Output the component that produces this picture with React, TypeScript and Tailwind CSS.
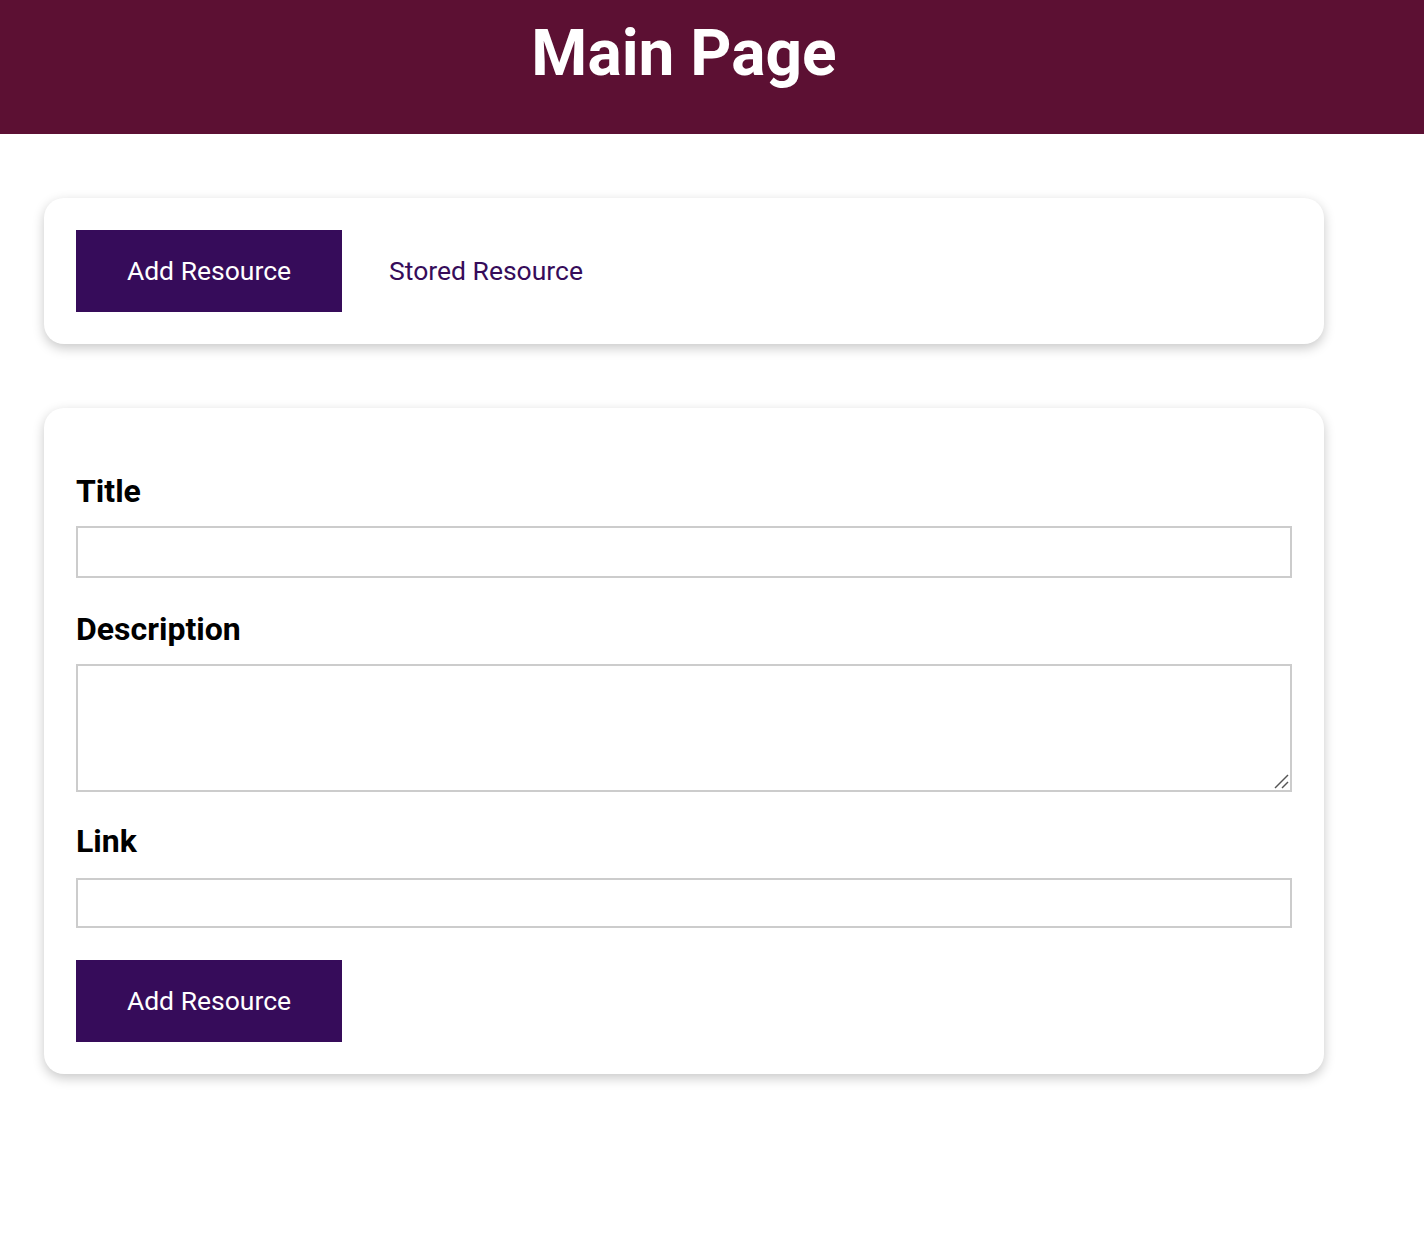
import React from "react";

const App = () => {
  return (
    <div className="min-h-[1258px] bg-white font-['Roboto',sans-serif]">
      <header className="w-full h-[134px] bg-[#5c1033] flex justify-center pt-[16px] pr-[56px]">
        <h1 className="text-[64px] leading-[75px] font-bold text-white">Main Page</h1>
      </header>

      <main className="pl-[44px] pt-[64px] flex flex-col gap-[64px]">
        <div className="w-[1280px] bg-white rounded-[20px] shadow-[0_4px_12px_rgba(0,0,0,0.22)] p-[32px] flex items-center">
          <button className="w-[266px] h-[82px] bg-[#360c5a] text-white text-[26.5px] cursor-pointer">
            Add Resource
          </button>
          <button className="h-[82px] pl-[47px] pr-[48px] text-[#360c5a] text-[26.5px] cursor-pointer">
            Stored Resource
          </button>
        </div>

        <form className="w-[1280px] bg-white rounded-[20px] shadow-[0_4px_12px_rgba(0,0,0,0.22)] p-[32px] flex flex-col">
          <label className="block mt-[32px] mb-[16px] text-[32px] leading-[38px] font-bold text-black">Title</label>
          <input type="text" className="h-[52px] w-full border-2 border-[#cccccc] outline-none" />

          <label className="block mt-[32px] mb-[16px] text-[32px] leading-[38px] font-bold text-black">Description</label>
          <div className="relative">
            <textarea className="h-[128px] w-full border-2 border-[#cccccc] outline-none block resize-none" />
            <svg className="absolute right-[2px] bottom-[2px] pointer-events-none" width="18" height="18" viewBox="0 0 18 18">
              <line x1="3" y1="16" x2="16" y2="3" stroke="#555" strokeWidth="1.5" />
              <line x1="10" y1="16" x2="16" y2="10" stroke="#555" strokeWidth="1.5" />
            </svg>
          </div>

          <label className="block mt-[30px] mb-[18px] text-[32px] leading-[38px] font-bold text-black">Link</label>
          <input type="text" className="h-[50px] w-full border-2 border-[#cccccc] outline-none" />

          <div className="mt-[32px]">
            <button type="button" className="w-[266px] h-[82px] bg-[#360c5a] text-white text-[26.5px] cursor-pointer">
              Add Resource
            </button>
          </div>
        </form>
      </main>
    </div>
  );
};

export default App;
